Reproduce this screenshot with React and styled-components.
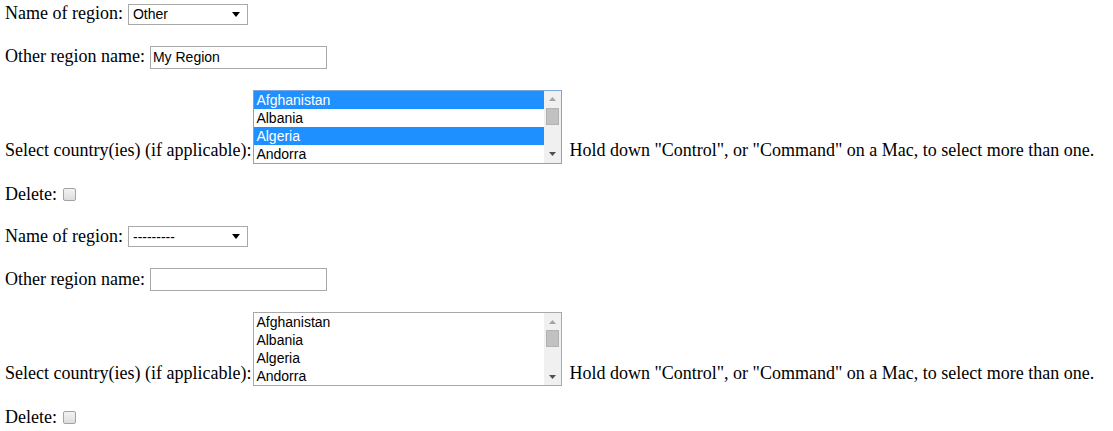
import React from "react";
import styled, { createGlobalStyle } from "styled-components";

const GlobalStyle = createGlobalStyle`
  body {
    margin: 0;
    background: #ffffff;
    color: #000000;
    font-family: "Liberation Serif", "Times New Roman", serif;
    font-size: 18px;
  }
`;

const Page = styled.form`
  display: flex;
  flex-direction: column;
  gap: 21px;
  padding: 3px 5px 0;
`;

const Group = styled.div`
  display: flex;
  flex-direction: column;
  gap: 21px;
`;

const Row = styled.div`
  display: flex;
  align-items: ${(p) => p.$align || "baseline"};
  gap: 4px;
  height: ${(p) => p.$height || "auto"};
  white-space: nowrap;
`;

const Label = styled.label`
  font-size: 18px;
`;

const Dropdown = styled.div`
  display: flex;
  align-items: center;
  justify-content: space-between;
  box-sizing: border-box;
  width: 120px;
  height: 21px;
  margin-left: 1px;
  padding: 0 7px 0 4px;
  border: 1px solid #a9a9a9;
  background: #ffffff;
  font-family: "Liberation Sans", Arial, sans-serif;
  font-size: 14px;
`;

const TextBox = styled.input`
  box-sizing: border-box;
  width: 177px;
  height: 23px;
  margin: 0 0 0 1px;
  padding: 0 2px;
  border: 1px solid #a9a9a9;
  background: #ffffff;
  color: #000000;
  font-family: "Liberation Sans", Arial, sans-serif;
  font-size: 14px;
  outline: none;
`;

const ListBox = styled.div`
  display: flex;
  box-sizing: border-box;
  width: 309px;
  height: 74px;
  margin-left: -2px;
  border: 1px solid ${(p) => (p.$focused ? "#7ba4dc" : "#a9a9a9")};
  background: #ffffff;
  font-family: "Liberation Sans", Arial, sans-serif;
  font-size: 14px;
`;

const OptionList = styled.div`
  display: flex;
  flex-direction: column;
  flex: 1;
  overflow: hidden;
`;

const Option = styled.div`
  flex: none;
  height: 18px;
  line-height: 18px;
  padding-left: 2px;
  background: ${(p) => (p.$selected ? "#1e90ff" : "transparent")};
  color: ${(p) => (p.$selected ? "#ffffff" : "#000000")};
`;

const Scrollbar = styled.div`
  display: flex;
  flex-direction: column;
  width: 17px;
  background: #f0f0f0;
`;

const ScrollButton = styled.div`
  display: flex;
  align-items: center;
  justify-content: center;
  height: 17px;
`;

const Track = styled.div`
  flex: 1;
  padding: 0 2px;
`;

const Thumb = styled.div`
  height: 17px;
  background: #c1c1c1;
  box-shadow: inset 0 0 0 1px #b2b2b2;
`;

const Hint = styled.span`
  margin-left: 3px;
`;

const Checkbox = styled.span`
  display: inline-block;
  box-sizing: border-box;
  width: 13px;
  height: 13px;
  margin-left: 2px;
  border: 1px solid #a3a3a3;
  border-radius: 2px;
  background: linear-gradient(#f3f3f3, #dddddd);
`;

const Arrow = ({ up, color, w = 7, h = 4 }) => (
  <svg width={w} height={h} viewBox={`0 0 ${w} ${h}`}>
    <polygon
      points={up ? `0,${h} ${w},${h} ${w / 2},0` : `0,0 ${w},0 ${w / 2},${h}`}
      fill={color}
    />
  </svg>
);

const countries = ["Afghanistan", "Albania", "Algeria", "Andorra"];

const RegionForm = ({ region, otherName, selected, focused }) => (
  <Group>
    <Row>
      <Label>Name of region:</Label>
      <Dropdown>
        <span>{region}</span>
        <Arrow color="#000000" w={8} h={5} />
      </Dropdown>
    </Row>
    <Row>
      <Label>Other region name:</Label>
      <TextBox type="text" defaultValue={otherName} />
    </Row>
    <Row $align="last baseline">
      <Label>Select country(ies) (if applicable):</Label>
      <ListBox $focused={focused}>
        <OptionList>
          {countries.map((c) => (
            <Option key={c} $selected={selected.includes(c)}>
              {c}
            </Option>
          ))}
        </OptionList>
        <Scrollbar>
          <ScrollButton>
            <Arrow up color="#a3a3a3" />
          </ScrollButton>
          <Track>
            <Thumb />
          </Track>
          <ScrollButton>
            <Arrow color="#505050" />
          </ScrollButton>
        </Scrollbar>
      </ListBox>
      <Hint>
        Hold down "Control", or "Command" on a Mac, to select more than one.
      </Hint>
    </Row>
    <Row $align="center" $height="20px">
      <Label>Delete:</Label>
      <Checkbox />
    </Row>
  </Group>
);

const App = () => (
  <>
    <GlobalStyle />
    <Page>
      <RegionForm
        region="Other"
        otherName="My Region"
        selected={["Afghanistan", "Algeria"]}
        focused
      />
      <RegionForm region="---------" otherName="" selected={[]} />
    </Page>
  </>
);

export default App;
